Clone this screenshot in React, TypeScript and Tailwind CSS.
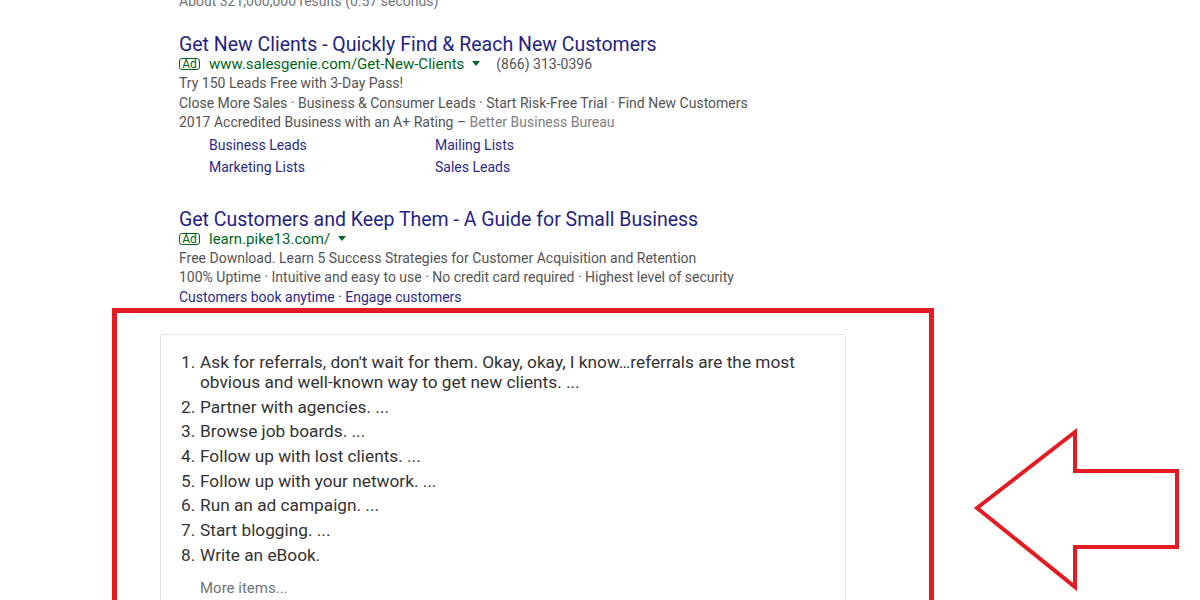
import { FC } from 'react'

const AdBadge: FC = () => (
  <span className="mr-[9px] inline-flex h-[12px] w-[21px] items-center justify-center rounded-[3px] border border-[#006621] text-[12px] leading-none text-[#006621]">
    Ad
  </span>
)

const Caret: FC = () => (
  <svg width="8" height="6" viewBox="0 0 8 6" className="ml-[8px] inline-block">
    <path d="M0 0 L8 0 L4 5 Z" fill="#006621" />
  </svg>
)

const steps = [
  "Ask for referrals, don't wait for them. Okay, okay, I know…referrals are the most obvious and well-known way to get new clients. ...",
  'Partner with agencies. ...',
  'Browse job boards. ...',
  'Follow up with lost clients. ...',
  'Follow up with your network. ...',
  'Run an ad campaign. ...',
  'Start blogging. ...',
  'Write an eBook.',
]

export default function App() {
  return (
    <div className="relative h-[600px] w-[1200px] overflow-hidden bg-white font-['Roboto',sans-serif]">
      <div className="-mt-[9px] pl-[179px]">
        <div className="text-[14px] leading-[20px] text-[#70757a]">
          About 321,000,000 results (0.57 seconds)
        </div>

        {/* first ad */}
        <div className="mt-[24px]">
          <div className="text-[19.5px] leading-[19.5px] text-[#251f85]">
            Get New Clients - Quickly Find &amp; Reach New Customers
          </div>
          <div className="flex h-[19.5px] items-center">
            <AdBadge />
            <span className="text-[15px] text-[#006621]">www.salesgenie.com/Get-New-Clients</span>
            <Caret />
            <span className="ml-[16px] text-[14px] text-[#545454]">(866) 313-0396</span>
          </div>
          <div className="text-[14px] leading-[19.5px] text-[#545454]">
            <div>Try 150 Leads Free with 3-Day Pass!</div>
            <div>Close More Sales · Business &amp; Consumer Leads · Start Risk-Free Trial · Find New Customers</div>
            <div>
              2017 Accredited Business with an A+ Rating – <span className="text-[#808080]">Better Business Bureau</span>
            </div>
          </div>
          <div className="mt-[1px] grid w-[480px] grid-cols-[226px_1fr] pl-[30px] text-[14px] leading-[22px] text-[#2c2a8a]">
            <span>Business Leads</span>
            <span>Mailing Lists</span>
            <span>Marketing Lists</span>
            <span>Sales Leads</span>
          </div>
        </div>

        {/* second ad */}
        <div className="mt-[32px]">
          <div className="text-[19.5px] leading-[19.5px] text-[#251f85]">
            Get Customers and Keep Them - A Guide for Small Business
          </div>
          <div className="flex h-[19.5px] items-center">
            <AdBadge />
            <span className="text-[15px] text-[#006621]">learn.pike13.com/</span>
            <Caret />
          </div>
          <div className="text-[14px] leading-[19.5px] text-[#545454]">
            <div>Free Download. Learn 5 Success Strategies for Customer Acquisition and Retention</div>
            <div>100% Uptime · Intuitive and easy to use · No credit card required · Highest level of security</div>
            <div className="text-[#2c2a8a]">Customers book anytime · Engage customers</div>
          </div>
        </div>
      </div>

      {/* highlighted featured snippet */}
      <div className="ml-[112px] mt-[1px] h-[320px] w-[822px] border-[5px] border-[#e31b23] pl-[43px] pt-[21px]">
        <div className="h-[300px] w-[686px] rounded-[3px] border border-[#e2e2e2] pl-[20px] pr-[20px] pt-[17px]">
          <ol className="flex flex-col gap-[4.7px] text-[17.25px] leading-[20px] text-[#333]">
            {steps.map((s, i) => (
              <li key={i} className="flex">
                <span className="w-[19px] shrink-0">{i + 1}.</span>
                <span>{s}</span>
              </li>
            ))}
          </ol>
          <div className="mt-[13px] pl-[19px] text-[15px] leading-[20px] text-[#70757a]">More items...</div>
        </div>
      </div>

      <svg className="absolute left-[970px] top-[425px]" width="215" height="170" viewBox="0 0 215 170">
        <polygon
          points="7,83 105,7 105,46 207,46 207,122 105,122 105,162"
          fill="none"
          stroke="#e31b23"
          strokeWidth="4"
          strokeLinejoin="miter"
        />
      </svg>
    </div>
  )
}
